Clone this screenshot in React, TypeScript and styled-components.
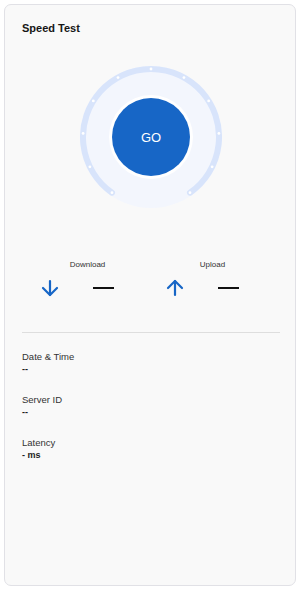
import { ArrowDown, ArrowUp } from "lucide-react";
import styled, { createGlobalStyle } from "styled-components";

const GlobalStyle = createGlobalStyle`
  html, body {
    margin: 0;
    padding: 0;
    background: #ffffff;
    font-family: "Liberation Sans", Arial, sans-serif;
  }
  * {
    box-sizing: border-box;
  }
`;

const Page = styled.div`
  padding: 4px;
  width: 300px;
  height: 590px;
`;

const Card = styled.div`
  display: flex;
  flex-direction: column;
  height: 582px;
  padding: 16px 15px 16px 17px;
  background: #f9f9f9;
  border: 1px solid #e1e1e6;
  border-radius: 7px;
`;

const Title = styled.h1`
  margin: 0;
  font-size: 11px;
  line-height: 14px;
  font-weight: 700;
  color: #161616;
`;

const Gauge = styled.div`
  position: relative;
  align-self: center;
  margin-top: 31px;
  width: 142px;
  height: 142px;
`;

const GoButton = styled.button`
  position: absolute;
  left: 50%;
  top: 50%;
  transform: translate(-50%, -50%);
  width: 78px;
  height: 78px;
  border: none;
  border-radius: 50%;
  background: #1766c6;
  color: #ffffff;
  font-family: "Liberation Sans", Arial, sans-serif;
  font-size: 13px;
  cursor: pointer;
`;

const Stats = styled.div`
  display: grid;
  grid-template-columns: 125px 125px;
  margin-top: 52px;
`;

const Stat = styled.div`
  display: flex;
  flex-direction: column;
  padding-left: 16px;
`;

const StatLabel = styled.div`
  width: 99px;
  text-align: center;
  font-size: 8px;
  line-height: 10px;
  color: #333333;
`;

const StatValue = styled.div`
  display: flex;
  align-items: center;
  gap: 31px;
  margin-top: 6px;
  height: 24px;
  color: #1766c6;
`;

const Dash = styled.span`
  display: block;
  width: 21px;
  height: 2px;
  background: #111111;
`;

const Divider = styled.hr`
  margin: 32px 0 0 0;
  border: none;
  height: 1px;
  background: #dedede;
`;

const InfoList = styled.div`
  display: flex;
  flex-direction: column;
  gap: 19px;
  margin-top: 18px;
`;

const InfoItem = styled.div`
  display: flex;
  flex-direction: column;
`;

const InfoLabel = styled.div`
  font-size: 9.5px;
  line-height: 12px;
  color: #333333;
`;

const InfoValue = styled.div`
  font-size: 9px;
  line-height: 12px;
  font-weight: 700;
  color: #222222;
`;

const C = 71;
const R = 68;
const START = -145;
const END = 145;

function polar(deg: number, r: number) {
  const a = (deg * Math.PI) / 180;
  return { x: C + r * Math.sin(a), y: C - r * Math.cos(a) };
}

function GaugeRing() {
  const s = polar(START, R);
  const e = polar(END, R);
  const dots = Array.from({ length: 11 }, (_, i) => polar(START + (i * (END - START)) / 10, R));
  return (
    <svg width="142" height="142" viewBox="0 0 142 142">
      <circle cx={C} cy={C} r={71} fill="#f3f6fd" />
      <path
        d={`M ${s.x} ${s.y} A ${R} ${R} 0 1 1 ${e.x} ${e.y}`}
        fill="none"
        stroke="#d8e4fb"
        strokeWidth={6}
        strokeLinecap="round"
      />
      {dots.map((d, i) => (
        <circle key={i} cx={d.x} cy={d.y} r={1.4} fill="#ffffff" />
      ))}
      <circle cx={C} cy={C} r={42} fill="#ffffff" />
    </svg>
  );
}

const info = [
  { label: "Date & Time", value: "--" },
  { label: "Server ID", value: "--" },
  { label: "Latency", value: "- ms" },
];

export default function App() {
  return (
    <>
      <GlobalStyle />
      <Page>
        <Card>
          <Title>Speed Test</Title>
          <Gauge>
            <GaugeRing />
            <GoButton>GO</GoButton>
          </Gauge>
          <Stats>
            <Stat>
              <StatLabel>Download</StatLabel>
              <StatValue>
                <ArrowDown size={24} strokeWidth={2.2} />
                <Dash />
              </StatValue>
            </Stat>
            <Stat>
              <StatLabel>Upload</StatLabel>
              <StatValue>
                <ArrowUp size={24} strokeWidth={2.2} />
                <Dash />
              </StatValue>
            </Stat>
          </Stats>
          <Divider />
          <InfoList>
            {info.map((item) => (
              <InfoItem key={item.label}>
                <InfoLabel>{item.label}</InfoLabel>
                <InfoValue>{item.value}</InfoValue>
              </InfoItem>
            ))}
          </InfoList>
        </Card>
      </Page>
    </>
  );
}
